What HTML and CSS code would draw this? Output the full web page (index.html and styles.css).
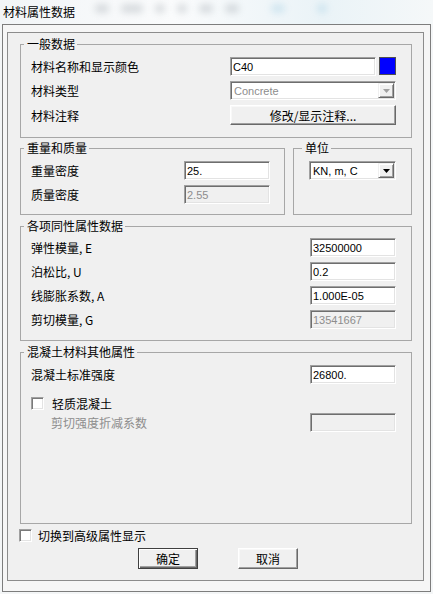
FILE: index.html
```html
<!DOCTYPE html>
<html lang="zh-CN">
<head>
    <meta charset="UTF-8">
    <meta name="viewport" content="width=device-width, initial-scale=1.0">
    <title>材料属性数据</title>
    <link rel="stylesheet" href="styles.css">
</head>

<body>
    <div class="titlebar">
        <span class="title">材料属性数据</span>
        <div class="blobs">
            <span class="blob"></span>
            <span class="blob wide"></span>
            <span class="blob small"></span>
            <span class="blob small"></span>
            <span class="blob"></span>
            <span class="blob"></span>
            <span class="blob blue"></span>
            <span class="blob blue small"></span>
        </div>
    </div>

    <div class="dialog">
        <div class="panel">

            <!-- 一般数据 -->
            <fieldset class="group general">
                <legend>一般数据</legend>
                <div class="rows">
                    <label>材料名称和显示颜色</label>
                    <div class="name-row">
                        <input class="field" type="text" value="C40">
                        <span class="swatch"></span>
                    </div>
                    <label>材料类型</label>
                    <div class="combo disabled">
                        <span class="combo-text">Concrete</span>
                        <span class="combo-btn"><svg width="7" height="4" viewBox="0 0 7 4"><path d="M0 0h7L3.5 4z"/></svg></span>
                    </div>
                    <label>材料注释</label>
                    <button class="btn">修改/显示注释...</button>
                </div>
            </fieldset>

            <div class="pair">
                <!-- 重量和质量 -->
                <fieldset class="group weight">
                    <legend>重量和质量</legend>
                    <div class="rows">
                        <label>重量密度</label>
                        <input class="field" type="text" value="25.">
                        <label>质量密度</label>
                        <input class="field" type="text" value="2.55" disabled>
                    </div>
                </fieldset>

                <!-- 单位 -->
                <fieldset class="group units">
                    <legend>单位</legend>
                    <div class="combo">
                        <span class="combo-text">KN, m, C</span>
                        <span class="combo-btn"><svg width="7" height="4" viewBox="0 0 7 4"><path d="M0 0h7L3.5 4z"/></svg></span>
                    </div>
                </fieldset>
            </div>

            <!-- 各项同性属性数据 -->
            <fieldset class="group iso">
                <legend>各项同性属性数据</legend>
                <div class="rows">
                    <label>弹性模量, E</label>
                    <input class="field" type="text" value="32500000">
                    <label>泊松比, U</label>
                    <input class="field" type="text" value="0.2">
                    <label>线膨胀系数, A</label>
                    <input class="field" type="text" value="1.000E-05">
                    <label>剪切模量, G</label>
                    <input class="field" type="text" value="13541667" disabled>
                </div>
            </fieldset>

            <!-- 混凝土材料其他属性 -->
            <fieldset class="group concrete">
                <legend>混凝土材料其他属性</legend>
                <div class="rows">
                    <label>混凝土标准强度</label>
                    <input class="field" type="text" value="26800.">
                </div>
                <div class="check-row">
                    <span class="check"></span>
                    <span>轻质混凝土</span>
                </div>
                <div class="rows sub">
                    <label class="muted">剪切强度折减系数</label>
                    <input class="field" type="text" value="" disabled>
                </div>
            </fieldset>

            <div class="check-row advanced">
                <span class="check"></span>
                <span>切换到高级属性显示</span>
            </div>

            <div class="actions">
                <button class="btn default">确定</button>
                <button class="btn">取消</button>
            </div>
        </div>
    </div>
</body>
</html>
```

FILE: styles.css
```css
body {
    margin: 0;
    width: 433px;
    height: 594px;
    overflow: hidden;
    background: #f4f6f7;
    font-family: "Noto Sans CJK SC", "Liberation Sans", sans-serif;
    font-size: 12px;
    color: #000;
}

/* barra del titolo (sfondo sfocato) */
.titlebar {
    height: 24px;
    display: flex;
    align-items: center;
    padding-left: 3px;
    background: linear-gradient(90deg, #f2f5f7, #fafbfc 40%, #eaf3f7 75%, #f5f8f9);
    overflow: hidden;
}

.title {
    line-height: 24px;
}

.blobs {
    display: flex;
    align-items: center;
    gap: 12px;
    margin-left: 20px;
    margin-top: -8px;
}

.blob {
    width: 14px;
    height: 9px;
    border-radius: 4px;
    background: #8e979f;
    opacity: 0.3;
    filter: blur(3.5px);
}

.blob.wide {
    width: 22px;
}

.blob.small {
    width: 10px;
}

.blob.blue {
    background: #8fc4dd;
    margin-left: 20px;
}

/* finestra */
.dialog {
    margin-left: 2px;
    width: 429px;
    box-sizing: border-box;
    border: 1px solid #7d7d7d;
    padding: 7px 6px 10px 4px;
    background: #f6f6f6;
}

.panel {
    border: 1px solid #8c8c8c;
    background: #f0f0f0;
    padding: 4px 11px 11px 12px;
}

.group {
    margin: 0;
    min-width: 0;
    border: 1px solid #a7a7a7;
    padding: 6px 15px 12px 10px;
}

.group legend {
    margin-left: -7px;
    padding: 0 2px 0 3px;
    line-height: 14px;
}

.rows {
    display: grid;
    grid-template-columns: 1fr 86px;
    row-gap: 5px;
    align-items: center;
}

.rows label {
    line-height: 19px;
    white-space: nowrap;
}

.general .rows {
    grid-template-columns: 1fr 166px;
}

.name-row {
    display: flex;
    gap: 3px;
}

.name-row .field {
    flex: 1;
    width: 0;
}

.swatch {
    width: 17px;
    height: 18px;
    box-sizing: border-box;
    background: #0000ff;
    border: 1px solid #505050;
}

/* campi di testo */
.field {
    height: 19px;
    width: 100%;
    box-sizing: border-box;
    margin: 0;
    padding: 0 2px;
    border: 1px solid;
    border-color: #a0a0a0 #fff #fff #a0a0a0;
    box-shadow: inset 1px 1px 0 #6e6e6e, inset -1px -1px 0 #e3e3e3;
    background: #fff;
    font-family: "Liberation Sans", sans-serif;
    font-size: 11px;
    color: #000;
    outline: none;
}

.field:disabled {
    background: #f0f0f0;
    color: #8d8d8d;
}

/* combo */
.combo {
    display: flex;
    align-items: center;
    height: 19px;
    box-sizing: border-box;
    border: 1px solid;
    border-color: #a0a0a0 #fff #fff #a0a0a0;
    box-shadow: inset 1px 1px 0 #6e6e6e, inset -1px -1px 0 #e3e3e3;
    background: #fff;
    font-family: "Liberation Sans", sans-serif;
    font-size: 11px;
}

.combo-text {
    flex: 1;
    padding-left: 3px;
}

.combo-btn {
    width: 16px;
    height: 15px;
    box-sizing: border-box;
    margin-right: 1px;
    display: flex;
    align-items: center;
    justify-content: center;
    background: #f0f0f0;
    border: 1px solid;
    border-color: #f0f0f0 #696969 #696969 #f0f0f0;
    box-shadow: inset 1px 1px 0 #fff, inset -1px -1px 0 #a0a0a0;
}

.combo.disabled .combo-text {
    color: #8d8d8d;
}

.combo.disabled .combo-btn path {
    fill: #a0a0a0;
}

/* pulsanti */
.btn {
    height: 21px;
    margin: 0;
    padding: 0;
    background: #f0f0f0;
    border: 1px solid;
    border-color: #fff #696969 #696969 #fff;
    box-shadow: inset -1px -1px 0 #a0a0a0, inset 1px 1px 0 #f8f8f8;
    font-family: "Noto Sans CJK SC", sans-serif;
    font-size: 12px;
    color: #000;
}

.general .btn {
    height: 20px;
}

.btn.default {
    border-color: #404040;
    box-shadow: inset 1px 1px 0 #fff, inset -1px -1px 0 #696969, inset -2px -2px 0 #a0a0a0;
}

/* riga peso/unità */
.pair {
    display: grid;
    grid-template-columns: 265px 119px;
    column-gap: 8px;
    margin-top: 3px;
}

.weight {
    padding: 6px 14px 10px 10px;
}

.units {
    padding: 6px 0 0 15px;
}

.units .combo {
    width: 87px;
}

.iso {
    margin-top: 4px;
    padding: 5px 15px 11px 10px;
}

.concrete {
    margin-top: 4px;
    height: 179px;
    box-sizing: border-box;
    padding: 6px 15px 0 10px;
}

/* checkbox */
.check-row {
    display: flex;
    align-items: center;
    gap: 8px;
    height: 13px;
    margin-top: 13px;
    line-height: 13px;
}

.check {
    width: 13px;
    height: 13px;
    box-sizing: border-box;
    border: 1px solid;
    border-color: #a0a0a0 #fff #fff #a0a0a0;
    box-shadow: inset 1px 1px 0 #7a7a7a, inset -1px -1px 0 #e3e3e3;
    background: #fff;
}

.rows.sub {
    margin-top: 3px;
}

.muted {
    padding-left: 20px;
    color: #8d8d8d;
}

.check-row.advanced {
    margin-top: 5px;
    margin-left: -1px;
    gap: 6px;
}

.actions {
    display: flex;
    gap: 40px;
    margin-top: 6px;
    padding-left: 118px;
}

.actions .btn {
    width: 60px;
}
```
